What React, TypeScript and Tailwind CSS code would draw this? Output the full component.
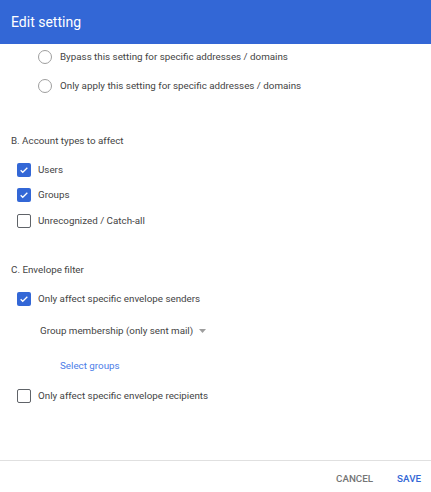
import React from 'react'

const Radio = ({ label, className = '' }: { label: string; className?: string }) => (
  <div className={`flex items-center h-[20px] pl-[38px] ${className}`}>
    <span className="w-[14px] h-[14px] rounded-full border border-[#9e9e9e] bg-white" />
    <span className="ml-[8px]">{label}</span>
  </div>
)

const Checkbox = ({ label, checked, className = '' }: { label: string; checked?: boolean; className?: string }) => (
  <div className={`flex items-center h-[20px] pl-[17px] ${className}`}>
    {checked ? (
      <span className="w-[14px] h-[14px] rounded-[2px] bg-[#3367d6] flex items-center justify-center">
        <svg width="10" height="10" viewBox="0 0 24 24" fill="none" stroke="white" strokeWidth="3">
          <path d="M4 12.5l5 5L20 6.5" />
        </svg>
      </span>
    ) : (
      <span className="w-[14px] h-[14px] rounded-[2px] border-[1.5px] border-[#5f6368] bg-white" />
    )}
    <span className="ml-[7px]">{label}</span>
  </div>
)

export default function App() {
  return (
    <div className="w-[431px] h-[492px] bg-white flex flex-col text-[9.8px] text-[#444444] font-['Roboto',sans-serif] overflow-hidden">
      {/* header */}
      <div className="h-[44px] shrink-0 bg-[#3367d6] flex items-center px-[11px]">
        <h1 className="text-white text-[14px]">Edit setting</h1>
      </div>

      <div className="flex-1 flex flex-col">
        <Radio className="mt-[3px]" label="Bypass this setting for specific addresses / domains" />
        <Radio className="mt-[9px]" label="Only apply this setting for specific addresses / domains" />

        <div className="pl-[11px] mt-[35px] h-[20px] flex items-center">B. Account types to affect</div>
        <Checkbox className="mt-[9px]" checked label="Users" />
        <Checkbox className="mt-[5px]" checked label="Groups" />
        <Checkbox className="mt-[6px]" label="Unrecognized / Catch-all" />

        <div className="pl-[11px] mt-[29px] h-[20px] flex items-center">C. Envelope filter</div>
        <Checkbox className="mt-[9px]" checked label="Only affect specific envelope senders" />
        <div className="flex items-center pl-[40px] mt-[12px] h-[20px]">
          <span>Group membership (only sent mail)</span>
          <svg className="ml-[6px]" width="7" height="4" viewBox="0 0 7 4">
            <path d="M0 0h7L3.5 4z" fill="#9e9e9e" />
          </svg>
        </div>
        <div className="pl-[60px] mt-[15px] h-[20px] flex items-center text-[#4c7de8]">Select groups</div>
        <Checkbox className="mt-[10px]" label="Only affect specific envelope recipients" />
      </div>

      {/* footer */}
      <div className="h-[32px] shrink-0 border-t border-[#e0e0e0] flex items-start pt-[11px] justify-end gap-[24px] pr-[10px] text-[9.8px] font-medium">
        <button className="text-[#757575]">CANCEL</button>
        <button className="text-[#3367d6]">SAVE</button>
      </div>
    </div>
  )
}
